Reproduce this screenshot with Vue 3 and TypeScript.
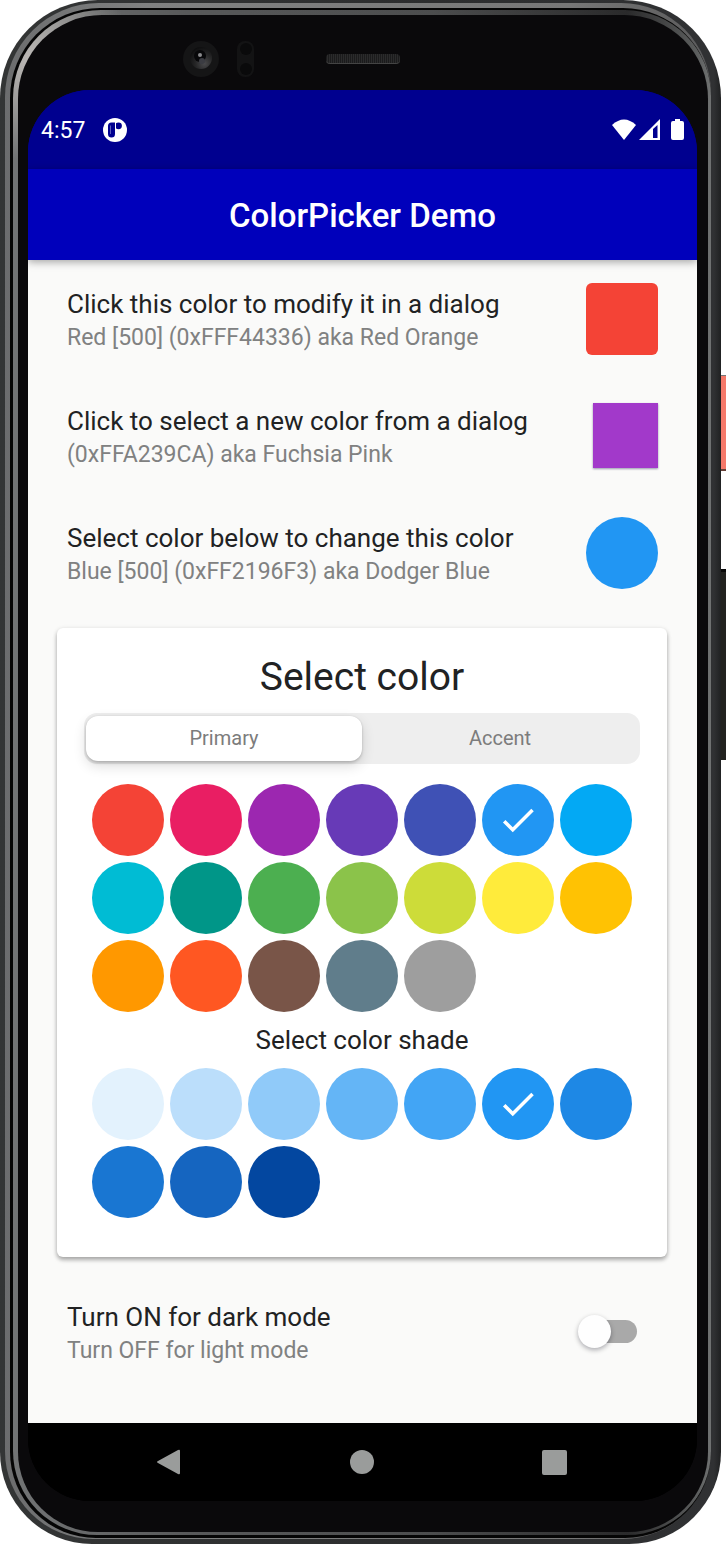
<script setup lang="ts">
import { ref } from 'vue'

interface Swatch {
  name: string
  hex: string
}

interface PickRow {
  title: string
  detail: string
  hex: string
  shape: 'rounded' | 'square' | 'round'
}

const rows: PickRow[] = [
  { title: 'Click this color to modify it in a dialog', detail: 'Red [500] (0xFFF44336) aka Red Orange', hex: '#f44336', shape: 'rounded' },
  { title: 'Click to select a new color from a dialog', detail: '(0xFFA239CA) aka Fuchsia Pink', hex: '#a239ca', shape: 'square' },
  { title: 'Select color below to change this color', detail: 'Blue [500] (0xFF2196F3) aka Dodger Blue', hex: '#2196f3', shape: 'round' },
]

const primaries: Swatch[] = [
  { name: 'Red', hex: '#f44336' },
  { name: 'Pink', hex: '#e91e63' },
  { name: 'Purple', hex: '#9c27b0' },
  { name: 'Deep purple', hex: '#673ab7' },
  { name: 'Indigo', hex: '#3f51b5' },
  { name: 'Blue', hex: '#2196f3' },
  { name: 'Light blue', hex: '#03a9f4' },
  { name: 'Cyan', hex: '#00bcd4' },
  { name: 'Teal', hex: '#009688' },
  { name: 'Green', hex: '#4caf50' },
  { name: 'Light green', hex: '#8bc34a' },
  { name: 'Lime', hex: '#cddc39' },
  { name: 'Yellow', hex: '#ffeb3b' },
  { name: 'Amber', hex: '#ffc203' },
  { name: 'Orange', hex: '#ff9800' },
  { name: 'Deep orange', hex: '#ff5722' },
  { name: 'Brown', hex: '#795548' },
  { name: 'Blue grey', hex: '#607d8b' },
  { name: 'Grey', hex: '#9e9e9e' },
]

const shades: Swatch[] = [
  { name: '50', hex: '#e3f2fd' },
  { name: '100', hex: '#bbdefb' },
  { name: '200', hex: '#90caf9' },
  { name: '300', hex: '#64b5f6' },
  { name: '400', hex: '#42a5f5' },
  { name: '500', hex: '#2196f3' },
  { name: '600', hex: '#1e88e5' },
  { name: '700', hex: '#1976d2' },
  { name: '800', hex: '#1565c0' },
  { name: '900', hex: '#0347a0' },
]

const tabs = ['Primary', 'Accent']
const activeTab = ref('Primary')
const color = ref('Blue')
const shade = ref('500')
const dark = ref(false)
</script>

<template>
  <div class="stage">
    <span class="side power"></span>
    <span class="side volume"></span>
    <div class="shell"><div class="rim"><div class="groove"><div class="edge"><div class="face">
      <div class="bezel" aria-hidden="true">
        <div class="sensors">
          <svg width="36" height="36" viewBox="0 0 36 36">
            <defs>
              <radialGradient id="lens" cx="0.65" cy="0.75" r="0.8">
                <stop offset="0" stop-color="#4a4a4c" />
                <stop offset="0.5" stop-color="#262627" />
                <stop offset="1" stop-color="#0c0c0d" />
              </radialGradient>
            </defs>
            <circle cx="18" cy="18" r="18" fill="#151516" />
            <circle cx="18" cy="17" r="11" fill="url(#lens)" />
            <circle cx="17" cy="15" r="6" fill="#070709" />
            <circle cx="19" cy="20" r="3" fill="#3b3c42" />
            <circle cx="17" cy="14" r="2" fill="#8a8a8d" />
          </svg>
          <svg width="17" height="36" viewBox="0 0 17 36">
            <rect x="0" y="0" width="17" height="36" rx="8" fill="#131314" />
            <circle cx="9" cy="8" r="6" fill="#0a0a0b" />
            <circle cx="9" cy="28" r="6" fill="#0a0a0b" />
          </svg>
        </div>
        <div class="speaker"></div>
        <div></div>
      </div>

      <div class="screen">
        <div class="status">
          <span class="time">4:57</span>
          <svg class="app-icon" width="24" height="24" viewBox="0 0 24 24" aria-hidden="true">
            <circle cx="12" cy="12" r="12" fill="#fff" />
            <path d="M8.500 4.500H12v11.500a3.500 3.500 0 0 1-7 0V8a3.500 3.500 0 0 1 3.500-3.500z" fill="#00008f" />
            <path d="M7.500 7.500v8.500" stroke="#5a5ab8" stroke-width="1" fill="none" />
            <circle cx="15.500" cy="7.800" r="3.400" fill="#00008f" />
            <path d="M12.500 4v7" stroke="#fff" stroke-width="1" />
          </svg>
          <svg class="signals" width="73" height="22" viewBox="0 0 73 22" aria-hidden="true">
            <path d="M1 6Q13 -5 25 6L13 21z" fill="#fff" />
            <path d="M28 21L49 0v21z" fill="#fff" />
            <path d="M42 10L46.500 6v13H42z" fill="#00008f" />
            <path d="M64 0h5v2h2q2 0 2 2v15q0 2-2 2h-9q-2 0-2-2V4q0-2 2-2h2z" fill="#fff" />
          </svg>
        </div>
        <header class="appbar"><h1>ColorPicker Demo</h1></header>

        <main>
          <div v-for="(row, i) in rows" :key="row.title" class="row">
            <div class="text">
              <span :id="`row-${i}`" class="title">{{ row.title }}</span>
              <span class="detail">{{ row.detail }}</span>
            </div>
            <button type="button" class="swatch" :class="row.shape" :style="{ background: row.hex }" :aria-labelledby="`row-${i}`"></button>
          </div>

          <section class="card">
            <h2>Select color</h2>
            <div class="tabs" role="tablist">
              <button v-for="tab in tabs" :key="tab" type="button" role="tab" class="tab" :class="{ active: tab === activeTab }" :aria-selected="tab === activeTab" @click="activeTab = tab">{{ tab }}</button>
            </div>
            <div class="palette">
              <button v-for="c in primaries" :key="c.name" type="button" class="dot" :style="{ background: c.hex }" :aria-label="c.name" :aria-pressed="c.name === color" @click="color = c.name">
                <svg v-if="c.name === color" width="42" height="42" viewBox="0 0 24 24" aria-hidden="true"><path d="M9 16.170 4.830 12l-1.420 1.410L9 19 21 7l-1.410-1.410z" fill="#fff" /></svg>
              </button>
            </div>
            <h3>Select color shade</h3>
            <div class="palette">
              <button v-for="s in shades" :key="s.name" type="button" class="dot" :style="{ background: s.hex }" :aria-label="`Shade ${s.name}`" :aria-pressed="s.name === shade" @click="shade = s.name">
                <svg v-if="s.name === shade" width="42" height="42" viewBox="0 0 24 24" aria-hidden="true"><path d="M9 16.170 4.830 12l-1.420 1.410L9 19 21 7l-1.410-1.410z" fill="#fff" /></svg>
              </button>
            </div>
          </section>

          <label class="row" for="dark-mode">
            <span class="text">
              <span class="title">Turn ON for dark mode</span>
              <span class="detail">Turn OFF for light mode</span>
            </span>
            <input id="dark-mode" v-model="dark" type="checkbox" role="switch" class="switch" />
          </label>
        </main>

        <nav class="navbar" aria-label="System">
          <button type="button" aria-label="Back">
            <svg width="26" height="28" viewBox="0 0 26 28"><path d="M2 13L22 2q2-1 2 1v22q0 2-2 1L2 15q-2-1 0-2z" fill="#9a9c9b" /></svg>
          </button>
          <button type="button" aria-label="Home">
            <svg width="24" height="24" viewBox="0 0 24 24"><circle cx="12" cy="12" r="12" fill="#9a9c9b" /></svg>
          </button>
          <button type="button" aria-label="Recent apps">
            <svg width="25" height="25" viewBox="0 0 25 25"><rect width="25" height="25" rx="2" fill="#9a9c9b" /></svg>
          </button>
        </nav>
      </div>
    </div></div></div></div></div>
  </div>
</template>

<style>
body {
  background: #fff;
}
</style>

<style scoped>
* {
  box-sizing: border-box;
}

.stage {
  position: relative;
  display: flex;
  min-height: 100vh;
  padding-right: 5px;
  font-family: Roboto, "Liberation Sans", sans-serif;
  color: #212223;
}

.side {
  position: absolute;
  right: 0;
  width: 6px;
}

.power {
  top: 375px;
  height: 96px;
  background: #f5796a;
  border-top: 1px solid #777;
  border-bottom: 2px solid #664038;
}

.volume {
  top: 569px;
  height: 191px;
  background: #22221f;
  border-top: 3px solid #0a0a0a;
}

.shell,
.rim,
.groove,
.edge,
.face {
  display: flex;
  flex: 1;
  min-width: 0;
}

.shell {
  position: relative;
  padding: 3px 10px 5px 5px;
  border-radius: 98px 98px 92px 92px;
  background: linear-gradient(90deg, #333535, #2c2d2e 60%, #303133 99%, #202122);
}

.rim {
  padding: 5px 0 1px 5px;
  border-radius: 94px 90px 88px 88px;
  background: linear-gradient(90deg, #6c6d6e, #808181 20%, #777 80%, #5a5a5b);
}

.groove {
  padding: 2px 0 3px 3px;
  border-radius: 90px 88px 86px 86px;
  background: #050505;
}

.edge {
  padding: 5px 3px 3px 5px;
  border-radius: 88px 86px 84px 84px;
  background:
    radial-gradient(circle at 20px 50px, #bdbab7, transparent 100px),
    linear-gradient(90deg, #727475, #58595a 25%, #4c4d4e 60%, #2a2a2b 88%, #5c5e5e 98%, #707272);
}

.face {
  flex-direction: column;
  padding: 0 11px 31px 10px;
  border-radius: 84px 84px 80px 80px;
  background: #0a090b;
}

.bezel {
  display: grid;
  grid-template-columns: 1fr auto 1fr;
  align-items: center;
  height: 75px;
  padding-top: 12px;
}

.sensors {
  display: flex;
  justify-content: flex-end;
  gap: 18px;
  margin-right: 72px;
}

.speaker {
  width: 74px;
  height: 10px;
  border-radius: 4px;
  background: repeating-linear-gradient(90deg, #1b1b1c 0 1px, #2b2b2c 1px 2px);
  border-bottom: 1px solid #444;
}

.screen {
  display: flex;
  flex: 1;
  flex-direction: column;
  overflow: hidden;
  border-radius: 62px;
  background: linear-gradient(#00008f 50%, #000 50%);
}

.status {
  display: flex;
  align-items: center;
  height: 79px;
  padding: 0 13px;
  background: #00008f;
  color: #fff;
  font-size: 23px;
}

.time {
  padding-top: 2px;
}

.app-icon {
  margin-left: 18px;
}

.signals {
  margin-left: auto;
}

.appbar {
  position: relative;
  display: flex;
  align-items: center;
  justify-content: center;
  height: 91px;
  background: #0000bb;
  box-shadow: 0 2px 8px rgba(0, 0, 0, 0.35);
  color: #fff;
}

h1,
h2,
h3 {
  margin: 0;
}

h1 {
  padding-top: 2px;
  font-size: 33px;
  font-weight: 500;
}

main {
  flex: 1;
  padding-bottom: 33px;
  background: #fafaf9;
}

.row {
  display: flex;
  align-items: center;
  justify-content: space-between;
  min-height: 117px;
  padding: 0 39px;
}

.text {
  display: flex;
  flex-direction: column;
  padding-top: 4px;
}

.title {
  font-size: 26px;
  line-height: 34px;
}

.detail {
  color: #808181;
  font-size: 23px;
  line-height: 34px;
}

button {
  padding: 0;
  border: 0;
  font-family: inherit;
  cursor: pointer;
}

.swatch {
  flex: none;
  width: 72px;
  height: 72px;
}

.rounded {
  border-radius: 6px;
}

.square {
  width: 65px;
  height: 65px;
  box-shadow: 0 1px 2px rgba(0, 0, 60, 0.4);
}

.round {
  border-radius: 50%;
}

.card {
  margin: 17px 30px 16px 29px;
  padding: 20px 27px 39px;
  border-radius: 6px;
  background: #fff;
  box-shadow: 0 3px 4px rgba(0, 0, 0, 0.28), 0 1px 5px rgba(0, 0, 0, 0.12);
  text-align: center;
}

h2 {
  margin-bottom: 7px;
  font-size: 39px;
  font-weight: 400;
  line-height: 58px;
}

.tabs {
  display: flex;
  height: 51px;
  margin-bottom: 20px;
  padding: 3px 2px;
  border-radius: 13px;
  background: #eee;
}

.tab {
  flex: 1;
  padding-bottom: 2px;
  border-radius: 12px;
  background: transparent;
  color: #7c7c7c;
  font-size: 20px;
}

.active {
  background: #fff;
  box-shadow: 0 5px 13px rgba(0, 0, 0, 0.14), 0 2px 3px rgba(0, 0, 0, 0.14), 0 0 2px rgba(0, 0, 0, 0.1);
}

.palette {
  display: grid;
  grid-template-columns: repeat(auto-fill, 72px);
  justify-content: center;
  gap: 6px;
}

.dot {
  display: flex;
  align-items: center;
  justify-content: center;
  height: 72px;
  border-radius: 50%;
}

h3 {
  font-size: 26px;
  font-weight: 400;
  line-height: 56px;
}

.switch {
  display: flex;
  align-items: center;
  appearance: none;
  width: 54px;
  height: 23px;
  margin: 0 21px 0 0;
  border-radius: 12px;
  background: #a9a9a9;
}

.switch::before {
  content: "";
  flex: none;
  width: 33px;
  height: 33px;
  margin-left: -5px;
  border-radius: 50%;
  background: #fefefe;
  box-shadow: 0 2px 5px rgba(0, 0, 20, 0.32);
}

.switch:checked {
  justify-content: flex-end;
}

.navbar {
  display: flex;
  height: 78px;
  padding: 0 46px 0 44px;
  background: #000;
}

.navbar button {
  display: flex;
  flex: 1;
  align-items: center;
  justify-content: center;
  background: transparent;
}
</style>
